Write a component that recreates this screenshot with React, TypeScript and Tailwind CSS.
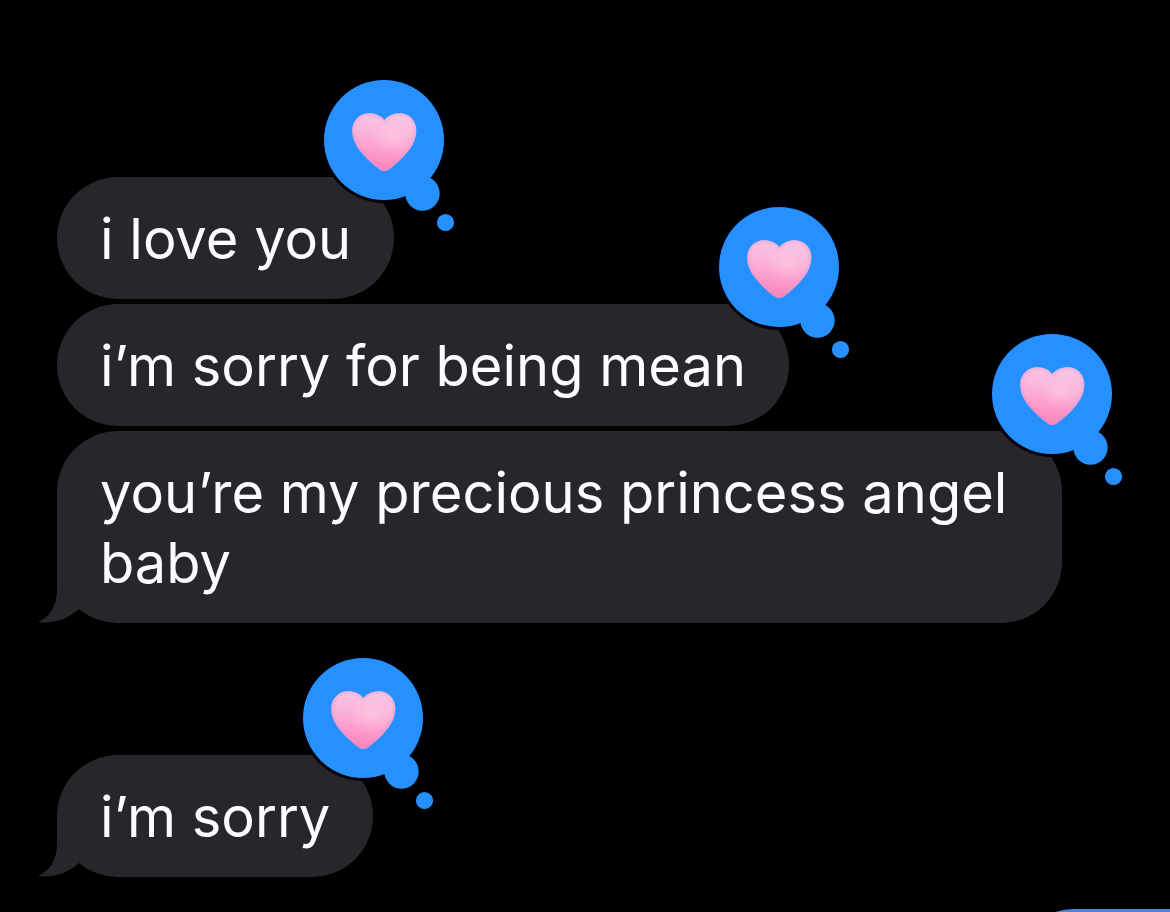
import React from "react";

type Message = { id: number; text: string; tail?: boolean };

const groups: Message[][] = [
  [
    { id: 1, text: "i love you" },
    { id: 2, text: "i’m sorry for being mean" },
    { id: 3, text: "you’re my precious princess angel baby", tail: true },
  ],
  [{ id: 4, text: "i’m sorry", tail: true }],
];

const heart =
  "M64.300 44C61 39.500 55.500 37.200 49.500 37.200C39.500 37.200 32.200 44.500 32.200 54.500C32.200 63 36 70 41 76C46 82 53 89 60 93.800C62.500 95.400 66 95.400 68.500 93.800C75.500 89 82.500 82 87.500 76C92.500 70 96.300 63 96.300 54.500C96.300 44.500 89.500 37.200 79.500 37.200C73.500 37.200 68 39.500 64.300 44Z";

function HeartReaction({ id }: { id: number }) {
  const body = `heart-body-${id}`;
  const shine = `heart-shine-${id}`;
  const soft = `heart-soft-${id}`;
  const clip = `heart-clip-${id}`;
  return (
    <svg
      role="img"
      aria-label="Loved"
      width="136"
      height="160"
      viewBox="0 0 136 160"
      className="absolute -top-[101px] -right-[62px] z-10"
    >
      <defs>
        <linearGradient id={body} x1="0.58" y1="0" x2="0.42" y2="1">
          <stop offset="0" stopColor="#f9c6e6" />
          <stop offset="0.35" stopColor="#fbb6da" />
          <stop offset="0.7" stopColor="#fd9aca" />
          <stop offset="1" stopColor="#fa80b6" />
        </linearGradient>
        <radialGradient id={shine}>
          <stop offset="0" stopColor="#ffcde6" stopOpacity="0.6" />
          <stop offset="1" stopColor="#ffc4e0" stopOpacity="0" />
        </radialGradient>
        <filter id={soft} x="-20%" y="-20%" width="140%" height="140%">
          <feGaussianBlur stdDeviation="1.5" />
        </filter>
        <clipPath id={clip}>
          <path d={heart} />
        </clipPath>
      </defs>
      <circle cx="64" cy="64" r="63" fill="#000008" />
      <circle cx="64" cy="64" r="60" fill="#2790ff" />
      <circle cx="102.500" cy="117.500" r="17.200" fill="#2790ff" />
      <circle cx="125.500" cy="146.500" r="8.600" fill="#2790ff" />
      <path d={heart} fill={`url(#${body})`} />
      <g clipPath={`url(#${clip})`}>
        <path d={heart} fill="none" stroke="#dd9ad6" strokeWidth="3" opacity="0.6" filter={`url(#${soft})`} />
        <ellipse cx="72" cy="60" rx="22" ry="18" fill={`url(#${shine})`} />
      </g>
    </svg>
  );
}

function Tail() {
  return (
    <svg
      aria-hidden="true"
      width="80"
      height="62"
      viewBox="0 0 80 62"
      className="absolute bottom-0 -left-[19px]"
    >
      <path d="M19 0V29C19 44 12 56 0 61C15 63 30 58 41 48L80 0Z" fill="#28262b" />
    </svg>
  );
}

function Bubble({ message }: { message: Message }) {
  return (
    <li className="relative w-fit max-w-[1005px] rounded-[61px] bg-[#28262b] px-[43px] pt-[27px] pb-[25px]">
      {message.tail && <Tail />}
      <p className="relative text-[56px] leading-[70px] text-[#fdfbff]">{message.text}</p>
      <HeartReaction id={message.id} />
    </li>
  );
}

export default function App() {
  return (
    <main className="flex h-screen flex-col overflow-hidden bg-black pt-[177px] font-['Inter',sans-serif]">
      <div className="flex shrink-0 flex-col gap-[132px] pl-[57px]">
        {groups.map((group) => (
          <ul key={group[0].id} className="flex flex-col gap-[5px]">
            {group.map((message) => (
              <Bubble key={message.id} message={message} />
            ))}
          </ul>
        ))}
      </div>
      <div className="mt-8 h-[122px] w-[157px] shrink-0 self-end rounded-l-[61px] bg-[#4a86d8]" />
    </main>
  );
}
